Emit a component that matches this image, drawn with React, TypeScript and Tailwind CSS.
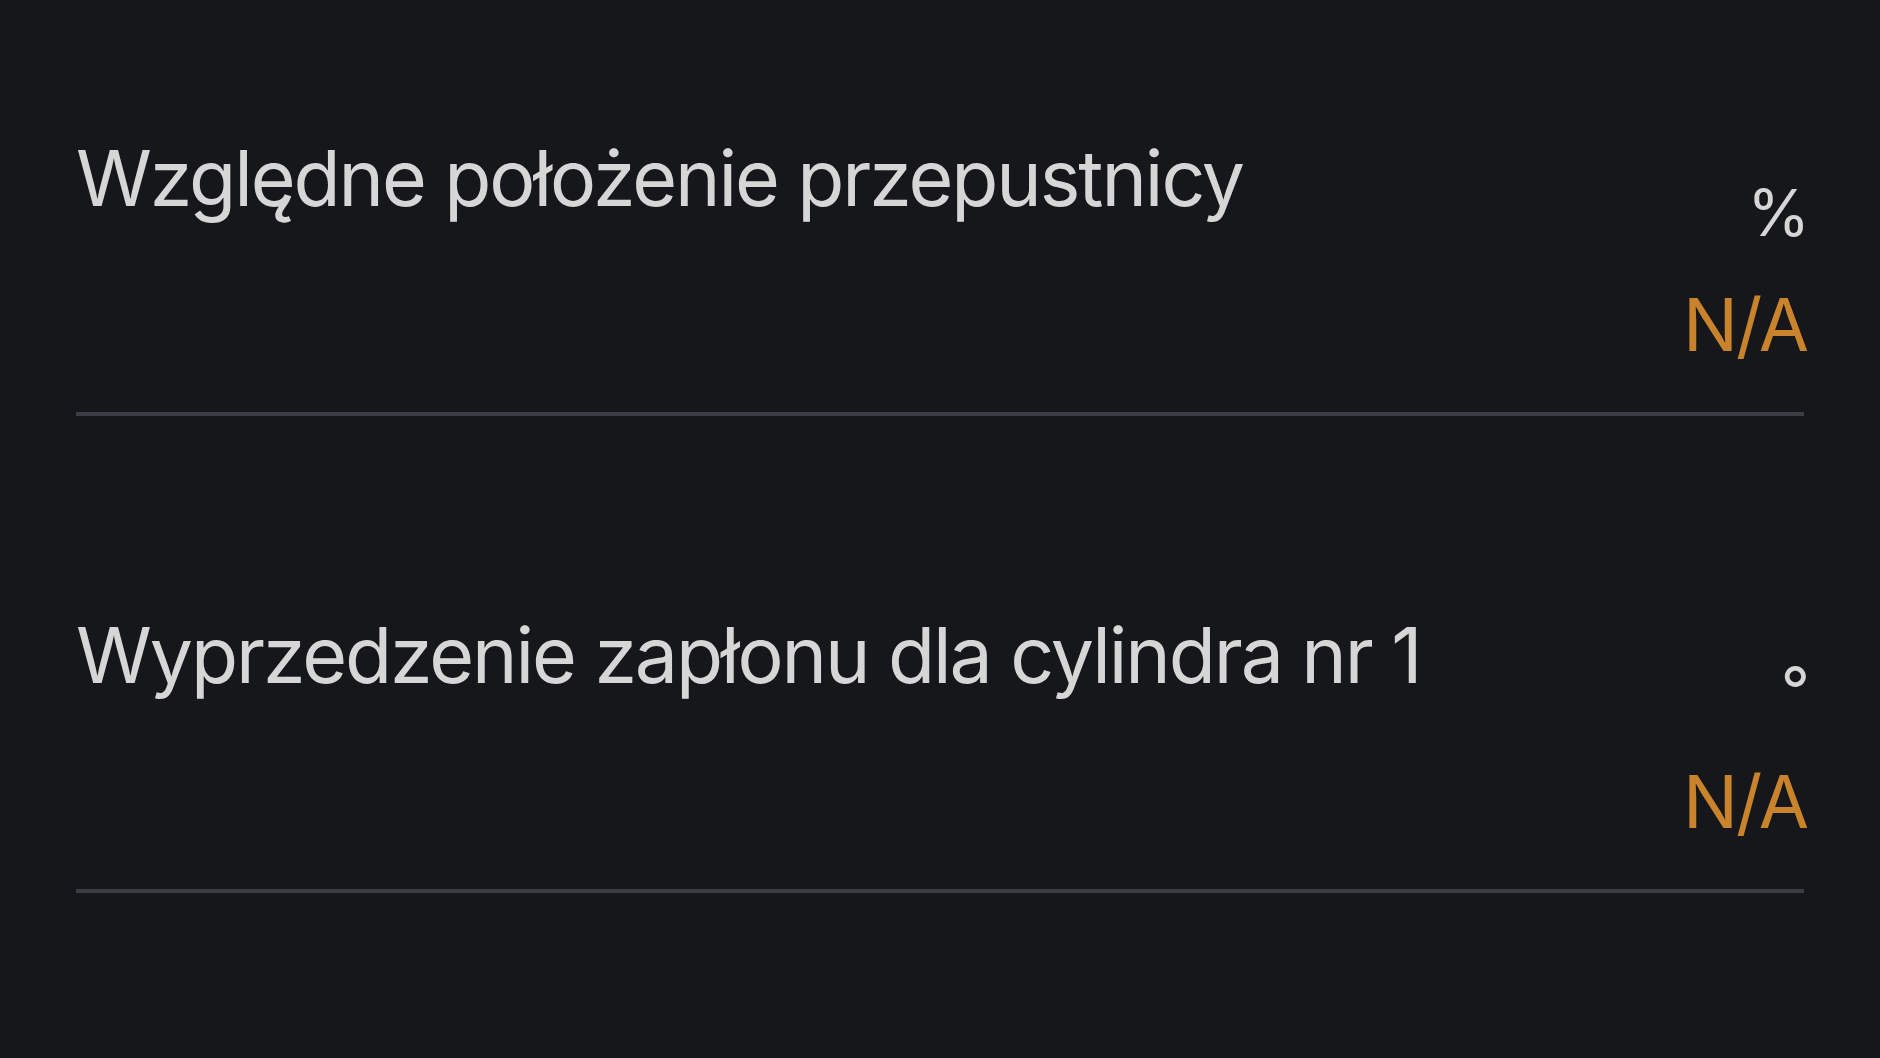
import React from 'react';

interface SensorRowProps {
  label: string;
  unit: string;
  value: string;
  first?: boolean;
}

const SensorRow: React.FC<SensorRowProps> = ({ label, unit, value, first }) => {
  return (
    <div
      className={`flex items-start justify-between border-b-4 border-[#3a3d44] ${
        first ? 'h-[416px] pt-[140px]' : 'h-[477px] pt-[201px]'
      }`}
    >
      <p className="text-[77px] leading-none text-[#d6d6d6] tracking-[-2.1px]">{label}</p>
      <div className="flex flex-col items-end mt-[41px]">
        <span className="text-[64px] leading-none text-[#d6d6d6] -mr-[6px]">{unit}</span>
        <span className="text-[73px] leading-none text-[#c8832c] tracking-[-2px] mt-[43px] -mr-[3px]">
          {value}
        </span>
      </div>
    </div>
  );
};

const App: React.FC = () => {
  const sensors = [
    { label: 'Względne położenie przepustnicy', unit: '%', value: 'N/A' },
    { label: 'Wyprzedzenie zapłonu dla cylindra nr 1', unit: '°', value: 'N/A' },
  ];

  return (
    <div className="w-[1880px] h-[1058px] overflow-hidden bg-[#16171a] font-['Inter','Noto_Sans',sans-serif]">
      <div className="px-[76px]">
        {sensors.map((s, i) => (
          <SensorRow key={s.label} {...s} first={i === 0} />
        ))}
      </div>
    </div>
  );
};

export default App;
